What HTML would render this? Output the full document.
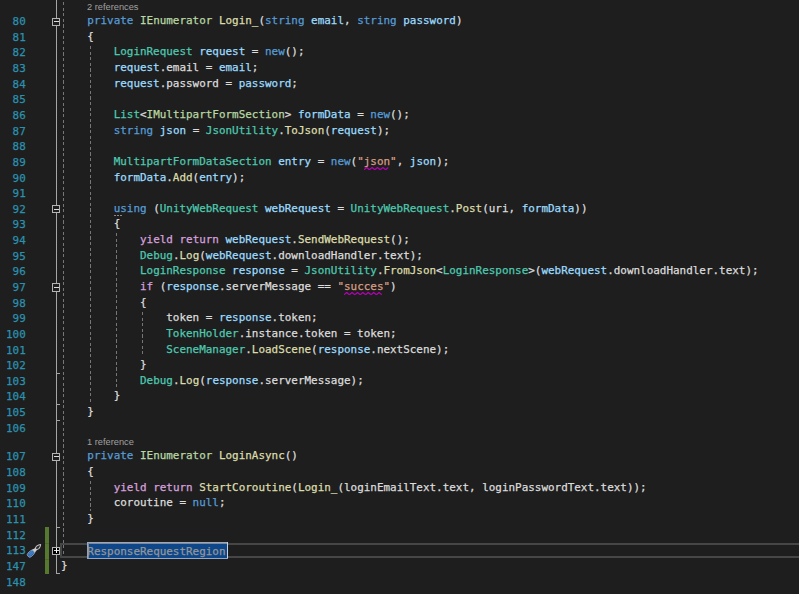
<!DOCTYPE html>
<html lang="en"><head><meta charset="utf-8"><title>Code</title><style>
html,body{margin:0;padding:0;background:#1e1e1e;}
body{width:799px;height:594px;overflow:hidden;position:relative;font-family:"DejaVu Sans Mono", "Liberation Mono", monospace;}
.ln,.cl{position:absolute;white-space:pre;font-family:"DejaVu Sans Mono", "Liberation Mono", monospace;font-size:11.0px;line-height:16px;height:16px;transform-origin:0 0;transform:scaleX(0.99357);}
.cl{left:61.0px;color:#dcdcdc;-webkit-text-stroke:0.25px;}
.ln{left:0;color:#2b91af;-webkit-text-stroke:0.25px;}
.k{color:#569cd6} .ku{color:#569cd6} .c{color:#d8a0df} .t{color:#4ec9b0} .i{color:#b8d7a3} .m{color:#dcdcaa} .v{color:#9cdcfe} .s,.sq{color:#d69d85}
.sel{color:#969696}
.lens{position:absolute;left:87px;font-family:"Liberation Sans",sans-serif;font-size:9.25px;color:#a0a0a0;line-height:12px;height:12px;white-space:pre;}
.abs{position:absolute}
</style></head><body>
<div class="abs" style="left:44.5px;top:527.3px;width:4.8px;height:47.2px;background:#56792f"></div>
<div class="abs" style="left:44.5px;top:543.0px;width:4.8px;height:0.9px;background:#4c6b2b"></div>
<div class="abs" style="left:44.5px;top:558.6px;width:4.8px;height:0.9px;background:#4c6b2b"></div>
<div class="abs" style="left:55.7px;top:0;width:1.3px;height:574px;background:#a5a5a5"></div>
<div class="abs" style="left:56px;top:373.2px;width:4px;height:1.2px;background:#a5a5a5"></div>
<div class="abs" style="left:56px;top:404.2px;width:4px;height:1.2px;background:#a5a5a5"></div>
<div class="abs" style="left:56px;top:419.8px;width:4px;height:1.2px;background:#a5a5a5"></div>
<div class="abs" style="left:56px;top:527.3px;width:4px;height:1.2px;background:#a5a5a5"></div>
<div class="abs" style="left:56px;top:573.2px;width:4px;height:1.2px;background:#a5a5a5"></div>
<div class="abs" style="left:62.9px;top:1.5px;width:1.1px;height:555.5px;background:repeating-linear-gradient(to bottom,#767676 0,#767676 3.2px,transparent 3.2px,transparent 5.6px)"></div>
<div class="abs" style="left:89.9px;top:45.68px;width:1.1px;height:358.71999999999997px;background:repeating-linear-gradient(to bottom,#767676 0,#767676 3.2px,transparent 3.2px,transparent 5.6px)"></div>
<div class="abs" style="left:89.9px;top:480.89px;width:1.1px;height:30.340000000000032px;background:repeating-linear-gradient(to bottom,#767676 0,#767676 3.2px,transparent 3.2px,transparent 5.6px)"></div>
<div class="abs" style="left:116.2px;top:233.36px;width:1.1px;height:155.39999999999998px;background:repeating-linear-gradient(to bottom,#767676 0,#767676 3.2px,transparent 3.2px,transparent 5.6px)"></div>
<div class="abs" style="left:141.9px;top:311.56px;width:1.1px;height:45.920000000000016px;background:repeating-linear-gradient(to bottom,#767676 0,#767676 3.2px,transparent 3.2px,transparent 5.6px)"></div>
<div class="abs" style="left:60.2px;top:542.5px;width:760px;height:2.1px;background:#464646"></div>
<div class="abs" style="left:60.2px;top:556.2px;width:760px;height:2.1px;background:#464646"></div>
<div class="abs" style="left:60.2px;top:542.5px;width:1.8px;height:15.8px;background:#464646"></div>
<div class="abs" style="left:86.9px;top:541.9px;width:139.2px;height:15px;background:#0d4689;border:1px solid #93a9cb;box-sizing:content-box;box-shadow:inset 1px 1px 0 #85898f"></div>
<div class="abs" style="left:226.6px;top:542.3px;width:1.5px;height:16.2px;background:#c9d2df"></div>
<div class="abs" style="left:52px;top:17.50px;width:6px;height:6.3px;border:1.1px solid #b4b4b4;background:#1e1e1e"></div>
<div class="abs" style="left:53.6px;top:21.25px;width:5px;height:1px;background:#dcdcdc"></div>
<div class="abs" style="left:52px;top:205.18px;width:6px;height:6.3px;border:1.1px solid #b4b4b4;background:#1e1e1e"></div>
<div class="abs" style="left:53.6px;top:208.93px;width:5px;height:1px;background:#dcdcdc"></div>
<div class="abs" style="left:52px;top:283.38px;width:6px;height:6.3px;border:1.1px solid #b4b4b4;background:#1e1e1e"></div>
<div class="abs" style="left:53.6px;top:287.13px;width:5px;height:1px;background:#dcdcdc"></div>
<div class="abs" style="left:52px;top:452.65px;width:6px;height:6.3px;border:1.1px solid #b4b4b4;background:#1e1e1e"></div>
<div class="abs" style="left:53.6px;top:456.40px;width:5px;height:1px;background:#dcdcdc"></div>
<div class="abs" style="left:52px;top:546.67px;width:6px;height:6.3px;border:1.1px solid #b4b4b4;background:#000"></div>
<div class="abs" style="left:53.6px;top:550.42px;width:5px;height:1px;background:#dcdcdc"></div>
<div class="abs" style="left:55.6px;top:548.42px;width:1px;height:5px;background:#fff"></div>
<div class="lens" style="top:1.2px">2 references</div>
<div class="lens" style="top:436.2px">1 reference</div>
<div class="ln" style="left:5.96px;top:14px"> 80</div>
<div class="cl" style="top:13px">    <span class="k">private</span> <span class="i">IEnumerator</span> <span class="m">Login_</span>(<span class="k">string</span> <span class="v">email</span>, <span class="k">string</span> <span class="v">password</span>)</div>
<div class="ln" style="left:5.96px;top:30px"> 81</div>
<div class="cl" style="top:29px">    {</div>
<div class="ln" style="left:5.96px;top:45px"> 82</div>
<div class="cl" style="top:44px">        <span class="t">LoginRequest</span> <span class="v">request</span> = <span class="k">new</span>();</div>
<div class="ln" style="left:5.96px;top:61px"> 83</div>
<div class="cl" style="top:60px">        <span class="v">request</span>.email = <span class="v">email</span>;</div>
<div class="ln" style="left:5.96px;top:77px"> 84</div>
<div class="cl" style="top:76px">        <span class="v">request</span>.password = <span class="v">password</span>;</div>
<div class="ln" style="left:5.96px;top:92px"> 85</div>
<div class="ln" style="left:5.96px;top:108px"> 86</div>
<div class="cl" style="top:107px">        <span class="t">List</span>&lt;<span class="i">IMultipartFormSection</span>&gt; <span class="v">formData</span> = <span class="k">new</span>();</div>
<div class="ln" style="left:5.96px;top:124px"> 87</div>
<div class="cl" style="top:123px">        <span class="k">string</span> <span class="v">json</span> = <span class="t">JsonUtility</span>.<span class="m">ToJson</span>(<span class="v">request</span>);</div>
<div class="ln" style="left:5.96px;top:139px"> 88</div>
<div class="ln" style="left:5.96px;top:155px"> 89</div>
<div class="cl" style="top:154px">        <span class="t">MultipartFormDataSection</span> <span class="v">entry</span> = <span class="k">new</span>(<span class="s">"</span><span class="sq">json</span><span class="s">"</span>, <span class="v">json</span>);</div>
<div class="ln" style="left:5.96px;top:171px"> 90</div>
<div class="cl" style="top:170px">        <span class="v">formData</span>.<span class="m">Add</span>(<span class="v">entry</span>);</div>
<div class="ln" style="left:5.96px;top:186px"> 91</div>
<div class="ln" style="left:5.96px;top:202px"> 92</div>
<div class="cl" style="top:201px">        <span class="ku">us</span><span class="k">ing</span> (<span class="t">UnityWebRequest</span> <span class="v">webRequest</span> = <span class="t">UnityWebRequest</span>.<span class="m">Post</span>(uri, <span class="v">formData</span>))</div>
<div class="ln" style="left:5.96px;top:217px"> 93</div>
<div class="cl" style="top:216px">        {</div>
<div class="ln" style="left:5.96px;top:233px"> 94</div>
<div class="cl" style="top:232px">            <span class="c">yield</span> <span class="c">return</span> <span class="v">webRequest</span>.<span class="m">SendWebRequest</span>();</div>
<div class="ln" style="left:5.96px;top:249px"> 95</div>
<div class="cl" style="top:248px">            <span class="t">Debug</span>.<span class="m">Log</span>(<span class="v">webRequest</span>.downloadHandler.text);</div>
<div class="ln" style="left:5.96px;top:264px"> 96</div>
<div class="cl" style="top:263px">            <span class="t">LoginResponse</span> <span class="v">response</span> = <span class="t">JsonUtility</span>.<span class="m">FromJson</span>&lt;<span class="t">LoginResponse</span>&gt;(<span class="v">webRequest</span>.downloadHandler.text);</div>
<div class="ln" style="left:5.96px;top:280px"> 97</div>
<div class="cl" style="top:279px">            <span class="c">if</span> (<span class="v">response</span>.serverMessage == <span class="s">"</span><span class="sq">succes</span><span class="s">"</span>)</div>
<div class="ln" style="left:5.96px;top:296px"> 98</div>
<div class="cl" style="top:295px">            {</div>
<div class="ln" style="left:5.96px;top:311px"> 99</div>
<div class="cl" style="top:310px">                token = <span class="v">response</span>.token;</div>
<div class="ln" style="left:5.96px;top:327px">100</div>
<div class="cl" style="top:326px">                <span class="t">TokenHolder</span>.instance.token = token;</div>
<div class="ln" style="left:5.96px;top:343px">101</div>
<div class="cl" style="top:342px">                <span class="t">SceneManager</span>.<span class="m">LoadScene</span>(<span class="v">response</span>.nextScene);</div>
<div class="ln" style="left:5.96px;top:358px">102</div>
<div class="cl" style="top:357px">            }</div>
<div class="ln" style="left:5.96px;top:374px">103</div>
<div class="cl" style="top:373px">            <span class="t">Debug</span>.<span class="m">Log</span>(<span class="v">response</span>.serverMessage);</div>
<div class="ln" style="left:5.96px;top:389px">104</div>
<div class="cl" style="top:388px">        }</div>
<div class="ln" style="left:5.96px;top:405px">105</div>
<div class="cl" style="top:404px">    }</div>
<div class="ln" style="left:5.96px;top:421px">106</div>
<div class="ln" style="left:5.96px;top:449px">107</div>
<div class="cl" style="top:448px">    <span class="k">private</span> <span class="i">IEnumerator</span> <span class="m">LoginAsync</span>()</div>
<div class="ln" style="left:5.96px;top:465px">108</div>
<div class="cl" style="top:464px">    {</div>
<div class="ln" style="left:5.96px;top:481px">109</div>
<div class="cl" style="top:480px">        <span class="c">yield</span> <span class="c">return</span> <span class="m">StartCoroutine</span>(<span class="m">Login_</span>(loginEmailText.text, loginPasswordText.text));</div>
<div class="ln" style="left:5.96px;top:496px">110</div>
<div class="cl" style="top:495px">        coroutine = <span class="k">null</span>;</div>
<div class="ln" style="left:5.96px;top:512px">111</div>
<div class="cl" style="top:511px">    }</div>
<div class="ln" style="left:5.96px;top:528px">112</div>
<div class="ln" style="left:5.96px;top:543px">113</div>
<div class="cl" style="top:544px">    <span class="sel">ResponseRequestRegion</span></div>
<div class="ln" style="left:5.96px;top:559px">147</div>
<div class="cl" style="top:558px">}</div>
<div class="ln" style="left:5.96px;top:575px">148</div>
<svg class="abs" style="left:363.98px;top:166.66px" width="26.0" height="3.4"><polyline points="0.00,2.7 2.70,0.5 5.40,2.7 8.10,0.5 10.80,2.7 13.50,0.5 16.20,2.7 18.90,0.5 21.60,2.7 24.30,0.5" fill="none" stroke="#b400b4" stroke-width="1.25" stroke-linejoin="round"/></svg>
<svg class="abs" style="left:344.24px;top:291.78px" width="39.2" height="3.4"><polyline points="0.00,2.7 2.70,0.5 5.40,2.7 8.10,0.5 10.80,2.7 13.50,0.5 16.20,2.7 18.90,0.5 21.60,2.7 24.30,0.5 27.00,2.7 29.70,0.5 32.40,2.7 35.10,0.5 37.80,2.7" fill="none" stroke="#b400b4" stroke-width="1.25" stroke-linejoin="round"/></svg>
<div class="abs" style="left:114.14px;top:214.68px;width:1.6px;height:1.2px;background:#8a8a8a"></div>
<div class="abs" style="left:117.14px;top:214.68px;width:1.6px;height:1.2px;background:#8a8a8a"></div>
<div class="abs" style="left:120.14px;top:214.68px;width:1.6px;height:1.2px;background:#8a8a8a"></div>
<svg class="abs" style="left:24px;top:540px" width="20" height="20" viewBox="0 0 20 20">
<g transform="translate(10.0,10.55) scale(0.89) translate(-10.1,-10.25) translate(3.6,16.6) rotate(-43)">
<path d="M11.6 -1.1 L14.6 -1.9 Q17.4 -1.6 19.2 0 Q17.4 1.6 14.6 1.9 L11.6 1.1 Z" fill="#2c2c2c" stroke="#c6c6c6" stroke-width="1.1" stroke-linejoin="round"/>
<path d="M7.8 -2.5 L12.4 -1.2 L12.4 1.2 L7.8 2.5 Z" fill="#cdcdcd"/>
<rect x="-0.2" y="-2.7" width="8.6" height="5.4" rx="2.4" fill="#2766b2" stroke="#aebfd6" stroke-width="0.75"/>
<path d="M1.6 -1.0 H7.8 M1.2 0.7 H7.8" stroke="#76a3dc" stroke-width="0.7" fill="none"/>
</g>
</svg>
</body></html>
